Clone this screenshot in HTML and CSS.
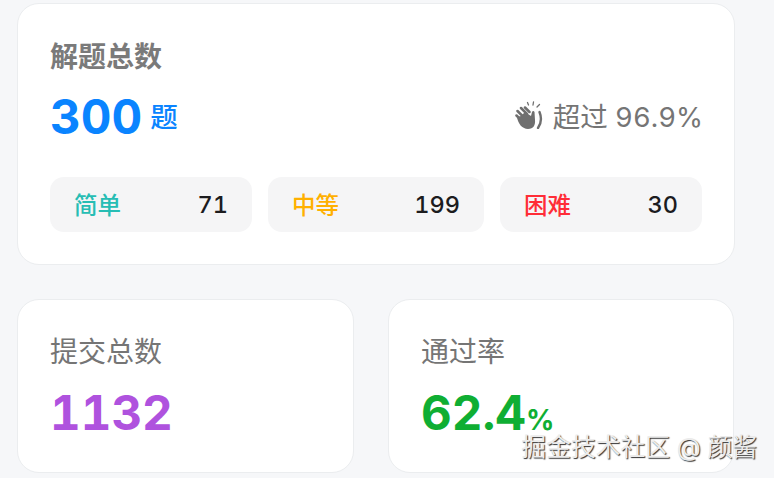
FILE: index.html
```html
<!DOCTYPE html>
<html lang="zh-CN">
  <head>
    <meta charset="UTF-8">
    <meta name="viewport" content="width=device-width, initial-scale=1.0">
    <title>解题统计</title>
    <link rel="stylesheet" href="styles.css">
  </head>
  <body>
    <div class="stats">
      <section class="card card-solved">
        <div class="label label-bold">解题总数</div>
        <div class="solved-row">
          <div class="solved-total"><span class="big blue">300</span><span class="solved-unit">题</span></div>
          <div class="beat">
            <svg class="clap" viewBox="0 0 28 28" width="28" height="28">
              <path d="M1.500 14.500 L7 20 M2.500 10 L9.500 17 M6 7 L12 13 M10 6.500 L14.500 11" stroke="#6f6f6f" stroke-width="2.500" stroke-linecap="round" fill="none"/>
              <path d="M2 16 C3 23 7.500 28 13 28 C18.500 28 20.500 24 20 19 L19.500 11 C19 9.500 17.500 9.500 17 11 L16 15 L10 11 L6 15 Z" fill="#6f6f6f"/>
              <path d="M24.500 11 C26.500 16 26.500 22 23 27" stroke="#6f6f6f" stroke-width="2.400" stroke-linecap="round" fill="none"/>
              <path d="M13.500 4 L12.500 1.500 M18 4 L18.500 1 M22 6 L24.500 3.500" stroke="#6f6f6f" stroke-width="1.300" stroke-linecap="round" fill="none"/>
            </svg>
            <span>超过 96.9%</span>
          </div>
        </div>
        <div class="levels">
          <div class="level level-easy"><span class="level-name teal">简单</span><span class="level-count">71</span></div>
          <div class="level level-mid"><span class="level-name orange">中等</span><span class="level-count">199</span></div>
          <div class="level level-hard"><span class="level-name red">困难</span><span class="level-count">30</span></div>
        </div>
      </section>
      <div class="bottom-row">
        <section class="card card-small">
          <div class="label">提交总数</div>
          <div class="big small-value purple">1132</div>
        </section>
        <section class="card card-small">
          <div class="label">通过率</div>
          <div class="big small-value green">62.4<span class="percent">%</span></div>
        </section>
      </div>
    </div>
    <div class="watermark">掘金技术社区 @ 颜酱</div>
  </body>
</html>
```

FILE: styles.css
```css
*{
    margin: 0;
    padding: 0;
    box-sizing: border-box;
}
html, body{
    height: 100%;
    overflow: hidden;
}
body{
    background-color: #f6f7f9;
    font-family: Inter, "Noto Sans CJK SC", sans-serif;
    font-variant-numeric: tabular-nums;
    padding: 3px 39px 0 17px;
}
.stats{
    display: flex;
    flex-direction: column;
    gap: 34px;
}
.card{
    background-color: white;
    border: 1px solid #ebedef;
    border-radius: 22px;
    padding: 32px;
}
.card-solved{
    height: 262px;
}
.label{
    font-size: 28px;
    line-height: 40px;
    color: #757575;
}
.label-bold{
    font-weight: 600;
    color: #7a7a7a;
    padding-top: 1px;
}
.big{
    font-size: 47.500px;
    line-height: 60px;
    font-weight: bold;
}
.blue{ color: #0a84ff; }
.purple{ color: #af52de; }
.green{ color: #0fae33; }
.teal{ color: #27bdb4; }
.orange{ color: #ffb000; }
.red{ color: #ff2d37; }
.solved-row{
    display: flex;
    justify-content: space-between;
    align-items: center;
    margin-top: 10px;
}
.solved-total{
    display: flex;
    align-items: center;
}
.solved-unit{
    font-size: 27.500px;
    font-weight: 500;
    color: #0a84ff;
    margin-left: 8px;
    padding-bottom: 5px;
}
.beat{
    display: flex;
    align-items: center;
    gap: 10px;
    font-size: 27.500px;
    color: #757575;
    padding-bottom: 4px;
    margin-right: -1px;
}
.levels{
    display: flex;
    gap: 16px;
    margin-top: 30px;
}
.level{
    display: flex;
    justify-content: space-between;
    align-items: center;
    height: 55px;
    background-color: #f5f5f6;
    border-radius: 14px;
    padding: 0 24px;
    font-size: 23.500px;
}
.level-easy{ width: 202px; }
.level-mid{ width: 216px; }
.level-hard{ width: 202px; }
.level-name{
    font-weight: 500;
    padding-bottom: 2px;
}
.level-count{
    color: #1c1c1e;
    font-weight: 500;
}
.bottom-row{
    display: grid;
    grid-template-columns: 337px 346px;
    gap: 34px;
}
.card-small{
    height: 174px;
    padding-top: 32px;
}
.small-value{
    margin-top: 11px;
}
.percent{
    font-size: 28px;
}
.watermark{
    position: absolute;
    right: 17px;
    bottom: 16px;
    font-size: 24.800px;
    line-height: 30px;
    color: #ececec;
    text-shadow: 1px 1px 1px #333;
}
```
